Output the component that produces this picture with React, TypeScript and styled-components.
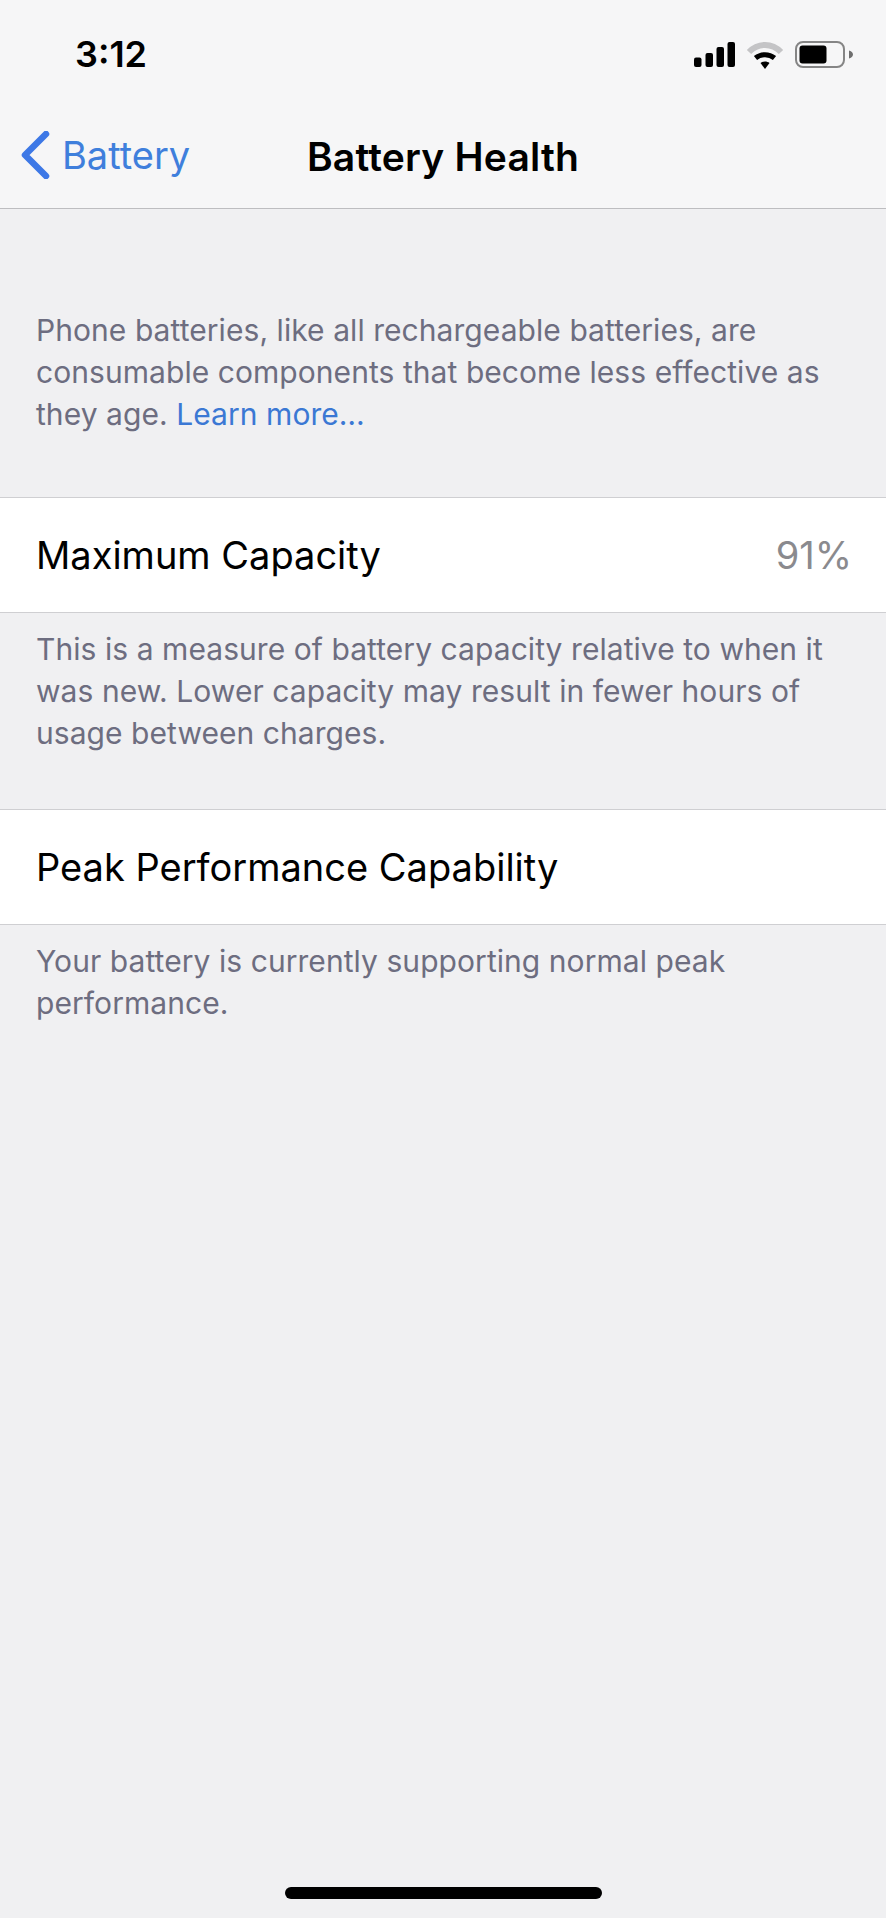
import styled, { createGlobalStyle } from "styled-components"

const GlobalStyle = createGlobalStyle`
  html, body {
    margin: 0;
    padding: 0;
    background: #f0f0f2;
  }
`

const Screen = styled.div`
  position: relative;
  width: 886px;
  height: 1918px;
  background: #f0f0f2;
  font-family: Inter, "Liberation Sans", sans-serif;
  overflow: hidden;
`

const Header = styled.div`
  height: 208px;
  background: #f6f6f7;
  border-bottom: 1px solid #bdbdc0;
`

const StatusBar = styled.div`
  height: 110px;
  display: flex;
  align-items: center;
  justify-content: space-between;
  padding: 0 31px 0 75px;
`

const Time = styled.div`
  font-weight: 600;
  font-size: 36px;
  line-height: 40px;
  color: #000;
  margin-bottom: 2px;
`

const StatusIcons = styled.div`
  display: flex;
  align-items: center;
  gap: 11px;
  margin-bottom: 1px;
`

const NavBar = styled.div`
  position: relative;
  height: 88px;
  display: flex;
  align-items: center;
  justify-content: center;
`

const BackLink = styled.div`
  position: absolute;
  left: 20px;
  top: 21px;
  display: flex;
  align-items: center;
  gap: 10px;
  color: #3f7fdc;
  font-size: 38px;
  line-height: 48px;
`

const NavTitle = styled.div`
  font-weight: 600;
  font-size: 39px;
  letter-spacing: 0.2px;
  line-height: 48px;
  color: #000;
  margin-top: 6px;
`

const Note = styled.div<{ $top: number; $bottom: number }>`
  padding: ${(p) => p.$top}px 36px ${(p) => p.$bottom}px;
  font-size: 30px;
  letter-spacing: 0.06px;
  line-height: 42px;
  color: #6d6d80;
`

const Link = styled.span`
  color: #3b78d4;
`

const Row = styled.div`
  height: 114px;
  display: flex;
  align-items: center;
  justify-content: space-between;
  padding: 0 34px 0 36px;
  background: #fff;
  border-top: 1px solid #cfcfd2;
  border-bottom: 1px solid #cfcfd2;
`

const RowLabel = styled.div`
  font-size: 38px;
  color: #000;
`

const RowValue = styled.div`
  font-size: 38px;
  color: #8a8a8e;
`

const HomeBar = styled.div`
  position: absolute;
  left: 285px;
  bottom: 19px;
  width: 317px;
  height: 12px;
  border-radius: 6px;
  background: #000;
`

const SignalIcon = () => (
  <svg width="41" height="25" viewBox="0 0 41 25" fill="#000">
    <rect x="0" y="15.5" width="7.5" height="9.5" rx="2" />
    <rect x="11.5" y="11" width="7.5" height="14" rx="2" />
    <rect x="22.5" y="5" width="7.5" height="20" rx="2" />
    <rect x="33.5" y="0" width="7.5" height="25" rx="2" />
  </svg>
)

const WifiIcon = () => (
  <svg width="38" height="28" viewBox="0 0 38 28" fill="none">
    <path d="M3 11 C12 1.5 26 1.5 35 11" stroke="#c4c4c6" strokeWidth="6" />
    <path d="M9.5 17 C15 12.5 23 12.5 28.5 17" stroke="#000" strokeWidth="5" />
    <path d="M14.5 22 L19 28 L23.5 22 C21 20 17 20 14.5 22 Z" fill="#000" />
  </svg>
)

const BatteryIcon = () => (
  <svg width="60" height="27" viewBox="0 0 60 27" fill="none">
    <rect x="1" y="1" width="48" height="25" rx="7" stroke="#858585" strokeWidth="2" />
    <rect x="4.5" y="4.5" width="27" height="18" rx="3" fill="#000" />
    <path d="M54 9.500 C57 10.500 58 12 58 13.500 C58 15 57 16.500 54 17.500 Z" fill="#6f6f6f" />
  </svg>
)

const BackChevron = () => (
  <svg width="32" height="48" viewBox="0 0 32 48" fill="none">
    <path d="M26 3 L5 24 L26 45" stroke="#3d78e6" strokeWidth="6.5" strokeLinecap="round" strokeLinejoin="round" />
  </svg>
)

export default function App() {
  return (
    <Screen>
      <GlobalStyle />
      <Header>
        <StatusBar>
          <Time>3:12</Time>
          <StatusIcons>
            <SignalIcon />
            <WifiIcon />
            <BatteryIcon />
          </StatusIcons>
        </StatusBar>
        <NavBar>
          <BackLink>
            <BackChevron />
            Battery
          </BackLink>
          <NavTitle>Battery Health</NavTitle>
        </NavBar>
      </Header>
      <Note $top={100} $bottom={62}>
        Phone batteries, like all rechargeable batteries, are
        <br />
        consumable components that become less effective as
        <br />
        they age. <Link>Learn more…</Link>
      </Note>
      <Row>
        <RowLabel>Maximum Capacity</RowLabel>
        <RowValue>91%</RowValue>
      </Row>
      <Note $top={15} $bottom={55}>
        This is a measure of battery capacity relative to when it
        <br />
        was new. Lower capacity may result in fewer hours of
        <br />
        usage between charges.
      </Note>
      <Row>
        <RowLabel>Peak Performance Capability</RowLabel>
      </Row>
      <Note $top={15} $bottom={0}>
        Your battery is currently supporting normal peak
        <br />
        performance.
      </Note>
      <HomeBar />
    </Screen>
  )
}
